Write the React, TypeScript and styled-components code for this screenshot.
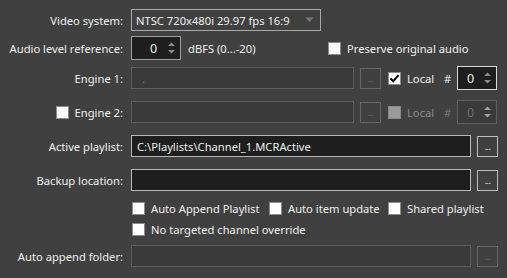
import styled, { createGlobalStyle } from "styled-components";

const GlobalStyle = createGlobalStyle`
  html, body {
    margin: 0;
    padding: 0;
    background: #404040;
  }
  body {
    font-family: "Noto Sans", "Open Sans", sans-serif;
    font-size: 11.2px;
    color: #f0f0f0;
  }
`;

const Check = ({ checked, disabled }: { checked?: boolean; disabled?: boolean }) => (
  <Box $disabled={disabled}>
    {checked && (
      <svg width="11" height="11" viewBox="0 0 11 11">
        <path d="M1.5 5.5 L4.2 8.3 L9.5 2.2" stroke="#000" strokeWidth="2" fill="none" />
      </svg>
    )}
  </Box>
);

const Arrows = ({ disabled }: { disabled?: boolean }) => (
  <ArrowBox>
    <svg width="9" height="14" viewBox="0 0 9 14">
      <path d="M1 5 L4.5 1.5 L8 5 Z" fill={disabled ? "#a0a0a0" : "#8a8a8a"} />
      <path d="M1 9 L4.5 12.5 L8 9 Z" fill={disabled ? "#a0a0a0" : "#8a8a8a"} />
    </svg>
  </ArrowBox>
);

const App = () => {
  return (
    <>
      <GlobalStyle />
      <Form>
        <Row $top={8}>
          <Label>Video system:</Label>
          <Combo>
            <span>NTSC 720x480i 29.97 fps 16:9</span>
            <svg width="9" height="6" viewBox="0 0 9 6">
              <path d="M0.5 0.5 L8.5 0.5 L4.5 5 Z" fill="#7a7a7a" />
            </svg>
          </Combo>
        </Row>

        <Row $top={4}>
          <Label>Audio level reference:</Label>
          <Spin $width={50} $height={24}>
            <SpinValue $pad={18}>0</SpinValue>
            <Arrows />
          </Spin>
          <Unit>dBFS (0...-20)</Unit>
          <CheckItem>
            <Check />
            <span>Preserve original audio</span>
          </CheckItem>
        </Row>

        <Row $top={6}>
          <Label>Engine 1:</Label>
          <Field $variant="disabled" $width={223}>
            <Placeholder>.</Placeholder>
          </Field>
          <Dots $disabled>...</Dots>
          <CheckItem $left={7} $width={56}>
            <Check checked />
            <span>Local</span>
          </CheckItem>
          <Hash>#</Hash>
          <Spin $width={40} $height={24} $focus>
            <SpinValue $pad={9}>0</SpinValue>
            <Arrows />
          </Spin>
        </Row>

        <Row $top={10}>
          <Label>
            <Check />
            <span>Engine 2:</span>
          </Label>
          <Field $variant="disabled" $width={223} />
          <Dots $disabled>...</Dots>
          <CheckItem $left={7} $width={56} $disabled>
            <Check disabled />
            <span>Local</span>
          </CheckItem>
          <Hash $disabled>#</Hash>
          <Spin $width={40} $height={24} $disabled>
            <SpinValue $pad={9} $disabled>0</SpinValue>
            <Arrows disabled />
          </Spin>
        </Row>

        <Row $top={10}>
          <Label>Active playlist:</Label>
          <Field $variant="active" $width={340}>
            C:\Playlists\Channel_1.MCRActive
          </Field>
          <Dots>...</Dots>
        </Row>

        <Row $top={10}>
          <Label>Backup location:</Label>
          <Field $variant="active" $width={340} />
          <Dots>...</Dots>
        </Row>

        <OptionRow $top={6}>
          <Spacer />
          <CheckItem $left={1} $width={137}>
            <Check />
            <span>Auto Append Playlist</span>
          </CheckItem>
          <CheckItem $width={119}>
            <Check />
            <span>Auto item update</span>
          </CheckItem>
          <CheckItem>
            <Check />
            <span>Shared playlist</span>
          </CheckItem>
        </OptionRow>

        <OptionRow $top={0}>
          <Spacer />
          <CheckItem $left={1}>
            <Check />
            <span>No targeted channel override</span>
          </CheckItem>
        </OptionRow>

        <Row $top={4}>
          <Label>Auto append folder:</Label>
          <Field $variant="disabled" $width={340} />
          <Dots $disabled>...</Dots>
        </Row>
      </Form>
    </>
  );
};

const Form = styled.div`
  display: flex;
  flex-direction: column;
  width: 507px;
  height: 278px;
  box-sizing: border-box;
`;

const Row = styled.div<{ $top: number }>`
  display: flex;
  align-items: center;
  height: 24px;
  margin-top: ${(p) => p.$top}px;
`;

const OptionRow = styled(Row)`
  height: 21px;
`;

const Label = styled.div`
  width: 123px;
  margin-right: 8px;
  display: flex;
  align-items: center;
  justify-content: flex-end;
  gap: 6px;
  white-space: nowrap;
  flex-shrink: 0;
`;

const Spacer = styled.div`
  width: 131px;
  flex-shrink: 0;
`;

const Combo = styled.div`
  width: 190px;
  height: 22px;
  box-sizing: border-box;
  border: 1px solid #a8a8a8;
  display: flex;
  align-items: center;
  justify-content: space-between;
  padding: 0 6px 0 4px;
  white-space: nowrap;
  flex-shrink: 0;
`;

const Spin = styled.div<{ $width: number; $height: number; $focus?: boolean; $disabled?: boolean }>`
  width: ${(p) => p.$width}px;
  height: ${(p) => p.$height}px;
  box-sizing: border-box;
  flex-shrink: 0;
  display: flex;
  align-items: center;
  justify-content: space-between;
  background: ${(p) => (p.$disabled ? "#3a3a3a" : "#1e1e1e")};
  border: 1px solid
    ${(p) => (p.$focus ? "#d8d8d8" : p.$disabled ? "#5e5e5e" : "#a0a0a0")};
`;

const SpinValue = styled.span<{ $pad: number; $disabled?: boolean }>`
  padding-left: ${(p) => p.$pad}px;
  font-size: 12.5px;
  color: ${(p) => (p.$disabled ? "#6c6c6c" : "#f0f0f0")};
`;

const ArrowBox = styled.div`
  display: flex;
  align-items: center;
  padding-right: 4px;
`;

const Unit = styled.span`
  margin-left: 7px;
  width: 140px;
  white-space: nowrap;
  flex-shrink: 0;
`;

const CheckItem = styled.div<{ $left?: number; $width?: number; $disabled?: boolean }>`
  display: flex;
  align-items: center;
  gap: 6px;
  margin-left: ${(p) => p.$left ?? 0}px;
  ${(p) => (p.$width ? `width: ${p.$width}px;` : "")}
  flex-shrink: 0;
  color: ${(p) => (p.$disabled ? "#8a8a8a" : "#f0f0f0")};
  white-space: nowrap;
`;

const Box = styled.div<{ $disabled?: boolean }>`
  width: 13px;
  height: 13px;
  box-sizing: border-box;
  display: flex;
  align-items: center;
  justify-content: center;
  background: ${(p) => (p.$disabled ? "#9a9a9a" : "#ffffff")};
  border: 1px solid ${(p) => (p.$disabled ? "#8a8a8a" : "#8c8c8c")};
  flex-shrink: 0;
`;

const Hash = styled.span<{ $disabled?: boolean }>`
  width: 13px;
  flex-shrink: 0;
  color: ${(p) => (p.$disabled ? "#7a7a7a" : "#f0f0f0")};
`;

const Field = styled.div<{ $variant: "active" | "disabled"; $width: number }>`
  width: ${(p) => p.$width}px;
  height: 22px;
  box-sizing: border-box;
  display: flex;
  align-items: center;
  padding-left: 5px;
  white-space: nowrap;
  overflow: hidden;
  flex-shrink: 0;
  background: ${(p) => (p.$variant === "active" ? "#1e1e1e" : "#3a3a3a")};
  border: 1px solid ${(p) => (p.$variant === "active" ? "#b8b8b8" : "#5c5c5c")};
`;

const Placeholder = styled.span`
  color: #7a7a7a;
  padding-left: 5px;
`;

const Dots = styled.div<{ $disabled?: boolean }>`
  width: 21px;
  height: 21px;
  box-sizing: border-box;
  margin-left: 6px;
  display: flex;
  align-items: flex-end;
  justify-content: center;
  padding-bottom: 5px;
  font-size: 9px;
  line-height: 9px;
  letter-spacing: -0.5px;
  flex-shrink: 0;
  color: ${(p) => (p.$disabled ? "#6a6a6a" : "#f0f0f0")};
  border: 1px solid ${(p) => (p.$disabled ? "#666666" : "#bdbdbd")};
`;

export default App;
